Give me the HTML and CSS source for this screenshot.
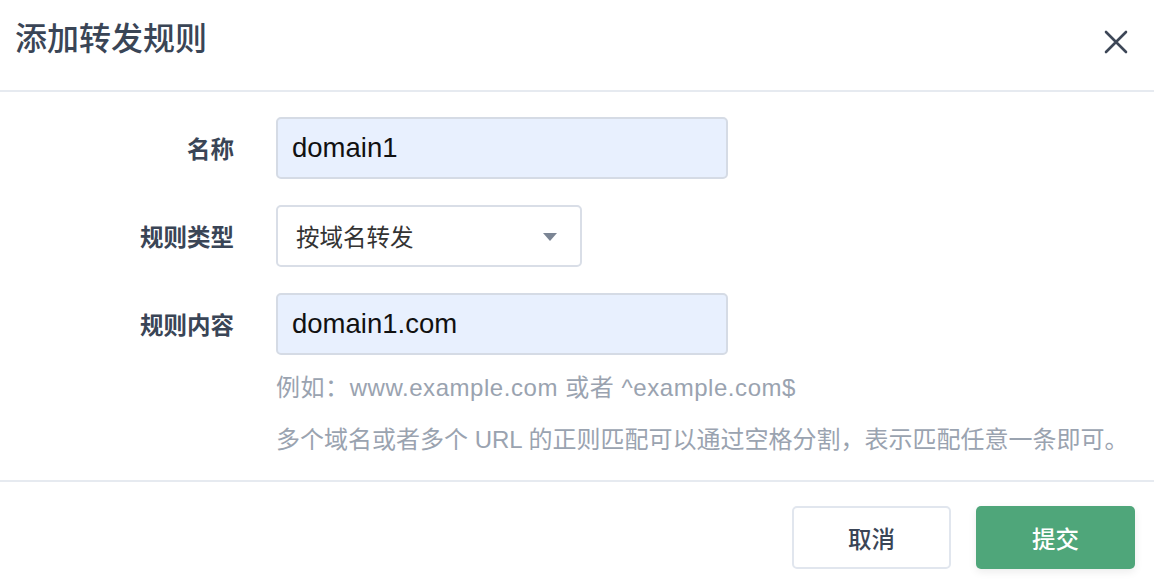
FILE: index.html
```html
<!DOCTYPE html>
<html lang="zh">
<head>
<meta charset="utf-8">
<title>添加转发规则</title>
<link rel="stylesheet" href="styles.css">
</head>
<body>
<div class="modal">
  <div class="modal-header">
    <h1 class="modal-title">添加转发规则</h1>
    <button class="close-btn" aria-label="关闭">
      <svg width="24" height="24" viewBox="0 0 24 24"><path d="M2 2 L22 22 M22 2 L2 22" stroke="#3d4757" stroke-width="2.6" stroke-linecap="round" fill="none"/></svg>
    </button>
  </div>
  <div class="modal-body">
    <div class="form-row">
      <label class="form-label">名称</label>
      <div class="form-control">
        <div class="input input-filled input-wide">domain1</div>
      </div>
    </div>
    <div class="form-row">
      <label class="form-label">规则类型</label>
      <div class="form-control">
        <div class="select">
          <span class="select-value">按域名转发</span>
          <svg class="select-arrow" width="14" height="8" viewBox="0 0 14 8"><path d="M0 0 H14 L7 8 Z" fill="#7b8594"/></svg>
        </div>
      </div>
    </div>
    <div class="form-row">
      <label class="form-label">规则内容</label>
      <div class="form-control">
        <div class="input input-filled input-wide">domain1.com</div>
        <p class="help help-first">例如：www.example.com 或者 ^example.com$</p>
        <p class="help">多个域名或者多个 URL 的正则匹配可以通过空格分割，表示匹配任意一条即可。</p>
      </div>
    </div>
  </div>
  <div class="modal-footer">
    <button class="btn btn-default">取消</button>
    <button class="btn btn-primary">提交</button>
  </div>
</div>
</body>
</html>
```
FILE: styles.css
```css
html, body {
  margin: 0;
  padding: 0;
  background: #ffffff;
}
body {
  font-family: "Liberation Sans", "Noto Sans CJK SC", sans-serif;
  color: #3a4556;
}
.modal {
  width: 1154px;
  height: 582px;
  display: flex;
  flex-direction: column;
  background: #fff;
}
.modal-header {
  height: 90px;
  border-bottom: 2px solid #e6eaf0;
  display: flex;
  align-items: center;
  justify-content: space-between;
  padding: 0 26px 0 15px;
  box-sizing: content-box;
}
.modal-title {
  margin: 0;
  font-family: "Noto Sans CJK SC", sans-serif;
  font-size: 32px;
  font-weight: 500;
  color: #3a4556;
  line-height: 1;
  margin-top: -19px;
}
.close-btn {
  border: 0;
  background: none;
  padding: 0;
  width: 24px;
  height: 24px;
  display: flex;
  margin-top: -6px;
}
.modal-body {
  padding: 25px 0 14px;
  display: flex;
  flex-direction: column;
  gap: 26px;
  border-bottom: 2px solid #e6eaf0;
}
.form-row {
  display: grid;
  grid-template-columns: 234px 1fr;
  column-gap: 42px;
  align-items: start;
}
.form-label {
  font-family: "Noto Sans CJK SC", sans-serif;
  font-size: 23.5px;
  font-weight: 700;
  color: #3a4556;
  text-align: right;
  line-height: 62px;
}
.form-control {
  display: flex;
  flex-direction: column;
  align-items: flex-start;
}
.input {
  height: 62px;
  box-sizing: border-box;
  border: 2px solid #d5dbe5;
  border-radius: 5px;
  padding: 0 14px;
  display: flex;
  align-items: center;
  font-size: 27.5px;
  color: #111;
}
.input-filled {
  background: #e8f0fe;
}
.input-wide {
  width: 452px;
}
.select {
  width: 306px;
  height: 62px;
  box-sizing: border-box;
  border: 2px solid #d9dee7;
  border-radius: 5px;
  padding: 0 23px 0 18px;
  display: flex;
  align-items: center;
  justify-content: space-between;
  background: #fff;
}
.select-value {
  font-family: "Noto Sans CJK SC", sans-serif;
  font-size: 23.5px;
  color: #333;
}
.select-arrow {
  margin-top: 2px;
}
.help {
  margin: 0;
  font-size: 24px;
  color: #9aa3b0;
  line-height: 52px;
}
.help-first {
  margin-top: 7px;
  letter-spacing: 0.55px;
}
.modal-footer {
  flex: 1;
  display: flex;
  justify-content: flex-end;
  align-items: flex-start;
  gap: 25px;
  padding: 24px 19px 0 0;
}
.btn {
  width: 159px;
  height: 63px;
  box-sizing: border-box;
  border-radius: 5px;
  font-family: "Noto Sans CJK SC", sans-serif;
  font-size: 23.5px;
  font-weight: 500;
  cursor: pointer;
}
.btn-default {
  background: #fff;
  border: 2px solid #e1e6ee;
  color: #3a4556;
}
.btn-primary {
  background: #4fa67a;
  border: 0;
  color: #fff;
  box-shadow: 0 3px 8px rgba(0, 0, 0, 0.08);
}
```
